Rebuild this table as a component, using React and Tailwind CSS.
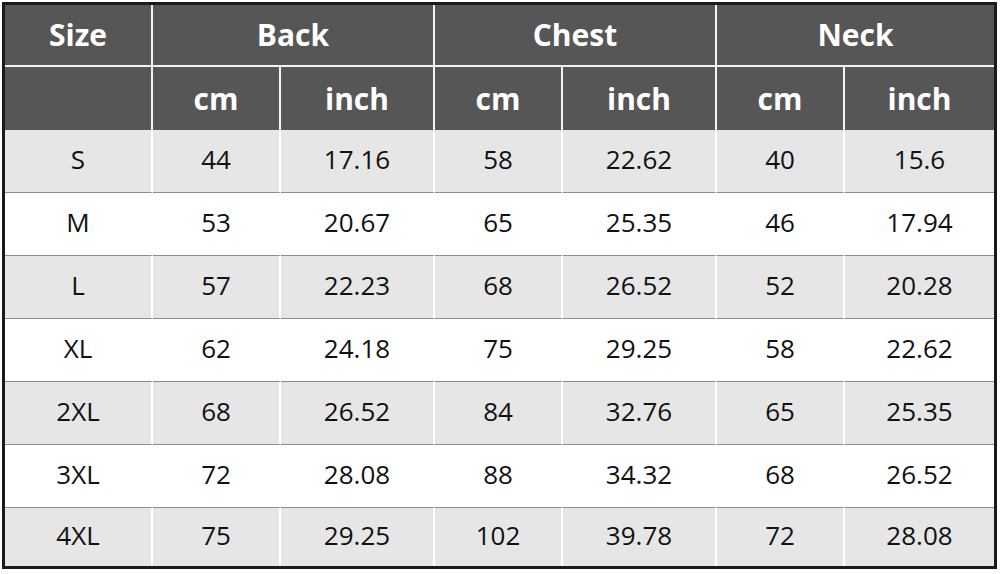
import React from "react";

const rows = [
  ["S", "44", "17.16", "58", "22.62", "40", "15.6"],
  ["M", "53", "20.67", "65", "25.35", "46", "17.94"],
  ["L", "57", "22.23", "68", "26.52", "52", "20.28"],
  ["XL", "62", "24.18", "75", "29.25", "58", "22.62"],
  ["2XL", "68", "26.52", "84", "32.76", "65", "25.35"],
  ["3XL", "72", "28.08", "88", "34.32", "68", "26.52"],
  ["4XL", "75", "29.25", "102", "39.78", "72", "28.08"],
];

export default function App() {
  return (
    <div
      className="w-[1000px] h-[574px] bg-white pt-[2px] pl-[2px]"
      style={{ fontFamily: '"Open Sans", "Noto Sans", sans-serif' }}
    >
      <div className="w-[995px] h-[567px] border-[3px] border-[#1a1a1a] bg-white">
        <div className="grid grid-cols-[148px_128px_154px_128px_154px_128px_149px] grid-rows-[62px_63px_63px_63px_63px_63px_63px_63px_58px]">
          {/* Header row 1 */}
          <div className="bg-[#565656] border-r-2 border-b-2 border-[#f2f2f2] flex items-center justify-center text-white font-bold text-[30px] pb-[2px]">
            Size
          </div>
          <div className="col-span-2 bg-[#565656] border-r-2 border-b-2 border-[#f2f2f2] flex items-center justify-center text-white font-bold text-[30px] pb-[2px]">
            Back
          </div>
          <div className="col-span-2 bg-[#565656] border-r-2 border-b-2 border-[#f2f2f2] flex items-center justify-center text-white font-bold text-[30px] pb-[2px]">
            Chest
          </div>
          <div className="col-span-2 bg-[#565656] border-b-2 border-[#f2f2f2] flex items-center justify-center text-white font-bold text-[30px] pb-[2px]">
            Neck
          </div>
          {/* Header row 2 */}
          {["", "cm", "inch", "cm", "inch", "cm", "inch"].map((t, i) => (
            <div
              key={"h2" + i}
              className={
                "bg-[#565656] flex items-center justify-center text-white font-bold text-[30px] " +
                (i < 6 ? "border-r-2 border-[#f2f2f2]" : "")
              }
            >
              {t}
            </div>
          ))}
          {/* Data rows */}
          {rows.map((r, ri) =>
            r.map((c, ci) => (
              <div
                key={ri + "-" + ci}
                className={
                  "flex items-center justify-center text-[26px] text-[#111111] pb-[3px] " +
                  (ri % 2 === 0 ? "bg-[#e6e6e6] " : "bg-white ") +
                  (ci < 6 ? "border-r-2 border-r-white " : "") +
                  (ri < 6 ? "border-b border-b-[#8c8c8c]" : "")
                }
              >
                {c}
              </div>
            ))
          )}
        </div>
      </div>
    </div>
  );
}
